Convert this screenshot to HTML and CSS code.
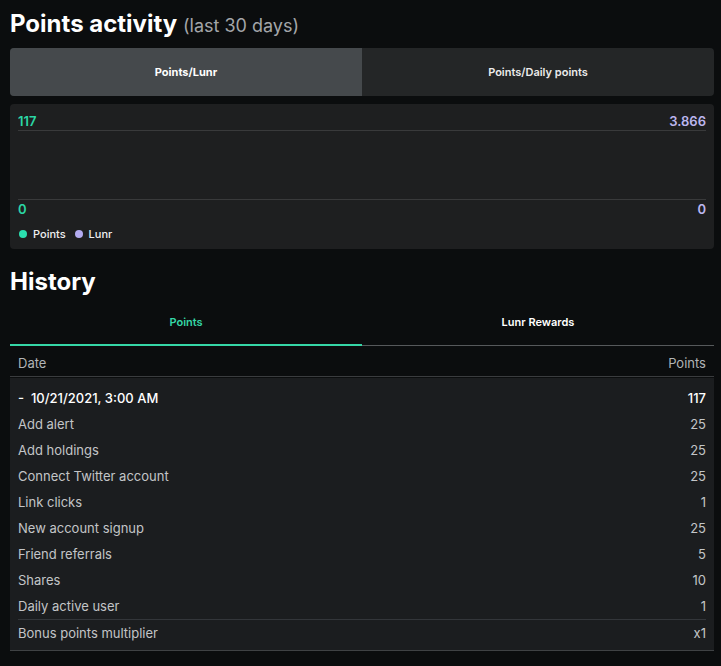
FILE: index.html
```html
<!DOCTYPE html>
<html lang="en">
<head>
    <meta charset="UTF-8">
    <meta name="viewport" content="width=device-width, initial-scale=1.0">
    <title>Points activity</title>
    <link rel="stylesheet" href="styles.css">
</head>
<body>
    <h1 class="titulo">Points activity <span class="sub">(last 30 days)</span></h1>

    <div class="selector">
        <button class="sel activo">Points/Lunr</button>
        <button class="sel">Points/Daily points</button>
    </div>

    <div class="grafico">
        <div class="eje">
            <span class="verde">117</span>
            <span class="lila">3.866</span>
        </div>
        <div class="area"></div>
        <div class="eje">
            <span class="verde">0</span>
            <span class="lila">0</span>
        </div>
        <div class="leyenda">
            <span class="punto p-verde"></span> Points
            <span class="punto p-lila"></span> Lunr
        </div>
    </div>

    <h2 class="titulo">History</h2>

    <div class="pestanas">
        <div class="pestana activa">Points</div>
        <div class="pestana">Lunr Rewards</div>
    </div>

    <div class="cabecera">
        <span>Date</span>
        <span>Points</span>
    </div>

    <div class="grupo">
        <div class="fila principal"><span>-&nbsp; 10/21/2021, 3:00 AM</span><span>117</span></div>
        <div class="fila"><span>Add alert</span><span>25</span></div>
        <div class="fila"><span>Add holdings</span><span>25</span></div>
        <div class="fila"><span>Connect Twitter account</span><span>25</span></div>
        <div class="fila"><span>Link clicks</span><span>1</span></div>
        <div class="fila"><span>New account signup</span><span>25</span></div>
        <div class="fila"><span>Friend referrals</span><span>5</span></div>
        <div class="fila"><span>Shares</span><span>10</span></div>
        <div class="fila"><span>Daily active user</span><span>1</span></div>
        <div class="fila bonus"><span>Bonus points multiplier</span><span>x1</span></div>
    </div>
</body>
</html>
```

FILE: styles.css
```css
body {
    font-family: Inter, "Liberation Sans", sans-serif;
    margin: 0;
    padding: 0 7px 0 10px;
    background: #0b0d0e;
    color: #ffffff;
}
.titulo {
    font-size: 24px;
    font-weight: 700;
    margin: 0;
}
h1.titulo {
    height: 48px;
    line-height: 48px;
}
.sub {
    font-size: 18px;
    font-weight: 400;
    color: #a3a6a9;
}
.selector {
    display: flex;
    height: 48px;
    border-radius: 4px;
    overflow: hidden;
    background: #242627;
}
.sel {
    flex: 1;
    border: none;
    background: transparent;
    color: #ebebeb;
    font-family: inherit;
    font-size: 11px;
    font-weight: 600;
    cursor: pointer;
}
.sel.activo {
    background: #45494c;
    color: #ffffff;
    font-weight: 700;
}
.grafico {
    margin-top: 8px;
    background: #1e1f20;
    border-radius: 4px;
    padding: 9px 8px 6px 8px;
    height: 145px;
    box-sizing: border-box;
    display: flex;
    flex-direction: column;
}
.eje {
    display: flex;
    justify-content: space-between;
    font-size: 13px;
    font-weight: 600;
    height: 17px;
    line-height: 17px;
}
.eje + .area + .eje {
    margin-top: 1px;
}
.verde {
    color: #2bd6a5;
}
.lila {
    color: #bcb6ee;
}
.area {
    border-top: 1px solid #393a3b;
    border-bottom: 1px solid #393a3b;
    height: 68px;
}
.leyenda {
    margin-top: 9px;
    font-size: 11px;
    font-weight: 500;
    color: #f0f0f0;
    display: flex;
    align-items: center;
    gap: 6px;
}
.punto {
    width: 8px;
    height: 8px;
    border-radius: 50%;
    display: inline-block;
    margin-left: 1px;
}
.punto.p-lila {
    margin-left: 3px;
}
.p-verde {
    background: #2be0b0;
}
.p-lila {
    background: #b3abf0;
}
h2.titulo {
    height: 56px;
    line-height: 66px;
}
.pestanas {
    display: flex;
}
.pestana {
    flex: 1;
    height: 41px;
    line-height: 34px;
    text-align: center;
    font-size: 11px;
    font-weight: 600;
    border-bottom: 1px solid #56595b;
    box-sizing: border-box;
}
.pestana.activa {
    color: #35d6a6;
    border-bottom: 2px solid #35d6a6;
}
.cabecera {
    display: flex;
    justify-content: space-between;
    padding: 0 8px;
    height: 30px;
    line-height: 34px;
    font-size: 13px;
    color: #b1b4b6;
    border-bottom: 1px solid #3a3c3e;
}
.grupo {
    margin-top: 1px;
    background: #1b1d1f;
    padding: 7px 8px 3px 8px;
    border-bottom: 1px solid #3f4244;
}
.fila {
    display: flex;
    justify-content: space-between;
    height: 26px;
    line-height: 26px;
    font-size: 13px;
    color: #c3c5c7;
}
.fila.principal {
    color: #ffffff;
    font-weight: 500;
}
.fila.bonus {
    border-top: 1px solid #33363a;
    height: 27px;
    line-height: 27px;
}
```
